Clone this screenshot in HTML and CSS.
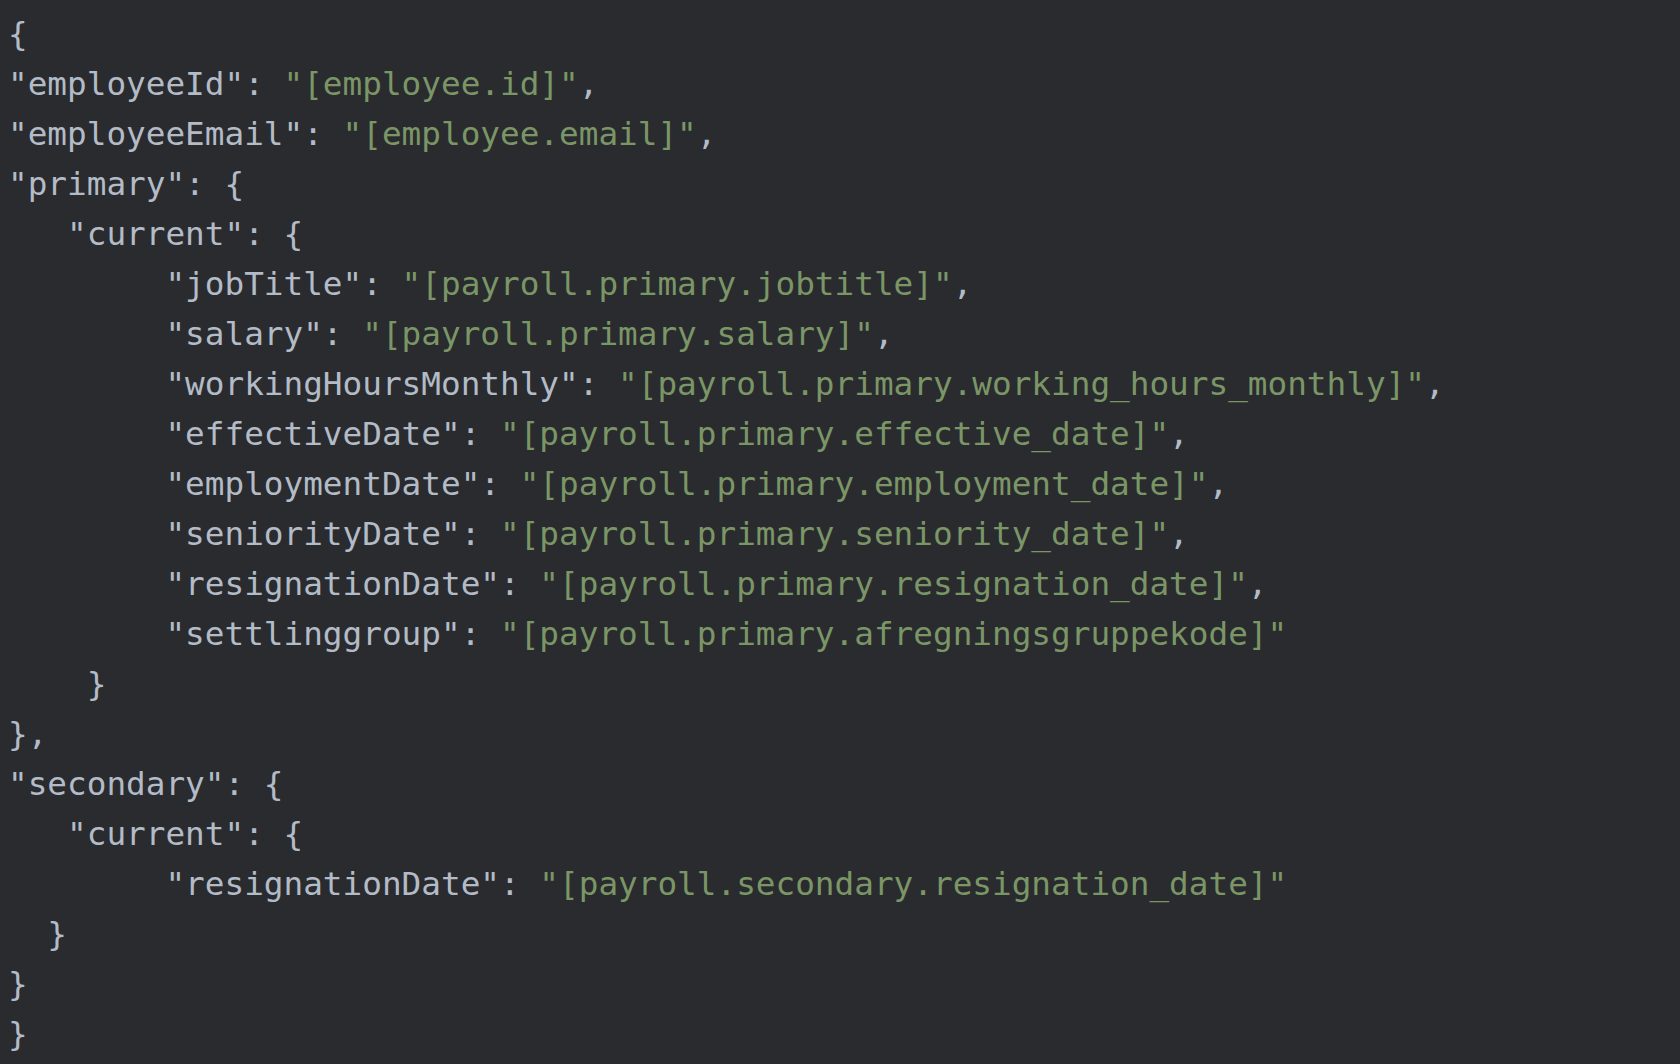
FILE: index.html
```html
<!DOCTYPE html>
<html>
<head>
<meta charset="utf-8">
<link rel="stylesheet" href="styles.css">
</head>
<body>
<pre class="code">{
"employeeId": <span class="s">"[employee.id]"</span>,
"employeeEmail": <span class="s">"[employee.email]"</span>,
"primary": {
   "current": {
        "jobTitle": <span class="s">"[payroll.primary.jobtitle]"</span>,
        "salary": <span class="s">"[payroll.primary.salary]"</span>,
        "workingHoursMonthly": <span class="s">"[payroll.primary.working_hours_monthly]"</span>,
        "effectiveDate": <span class="s">"[payroll.primary.effective_date]"</span>,
        "employmentDate": <span class="s">"[payroll.primary.employment_date]"</span>,
        "seniorityDate": <span class="s">"[payroll.primary.seniority_date]"</span>,
        "resignationDate": <span class="s">"[payroll.primary.resignation_date]"</span>,
        "settlinggroup": <span class="s">"[payroll.primary.afregningsgruppekode]"</span>
    }
},
"secondary": {
   "current": {
        "resignationDate": <span class="s">"[payroll.secondary.resignation_date]"</span>
  }
}
}</pre>
</body>
</html>
```
FILE: styles.css
```css
html, body {
  background: #2a2b2f;
}
body {
  margin: 0;
  padding: 9px 8px 8px 8px;
}
.code {
  margin: 0;
  font-family: "DejaVu Sans Mono", "Liberation Mono", monospace;
  font-size: 32.7px;
  line-height: 50px;
  color: #b3bbc7;
  white-space: pre;
}
.s {
  color: #7b9666;
}
```
